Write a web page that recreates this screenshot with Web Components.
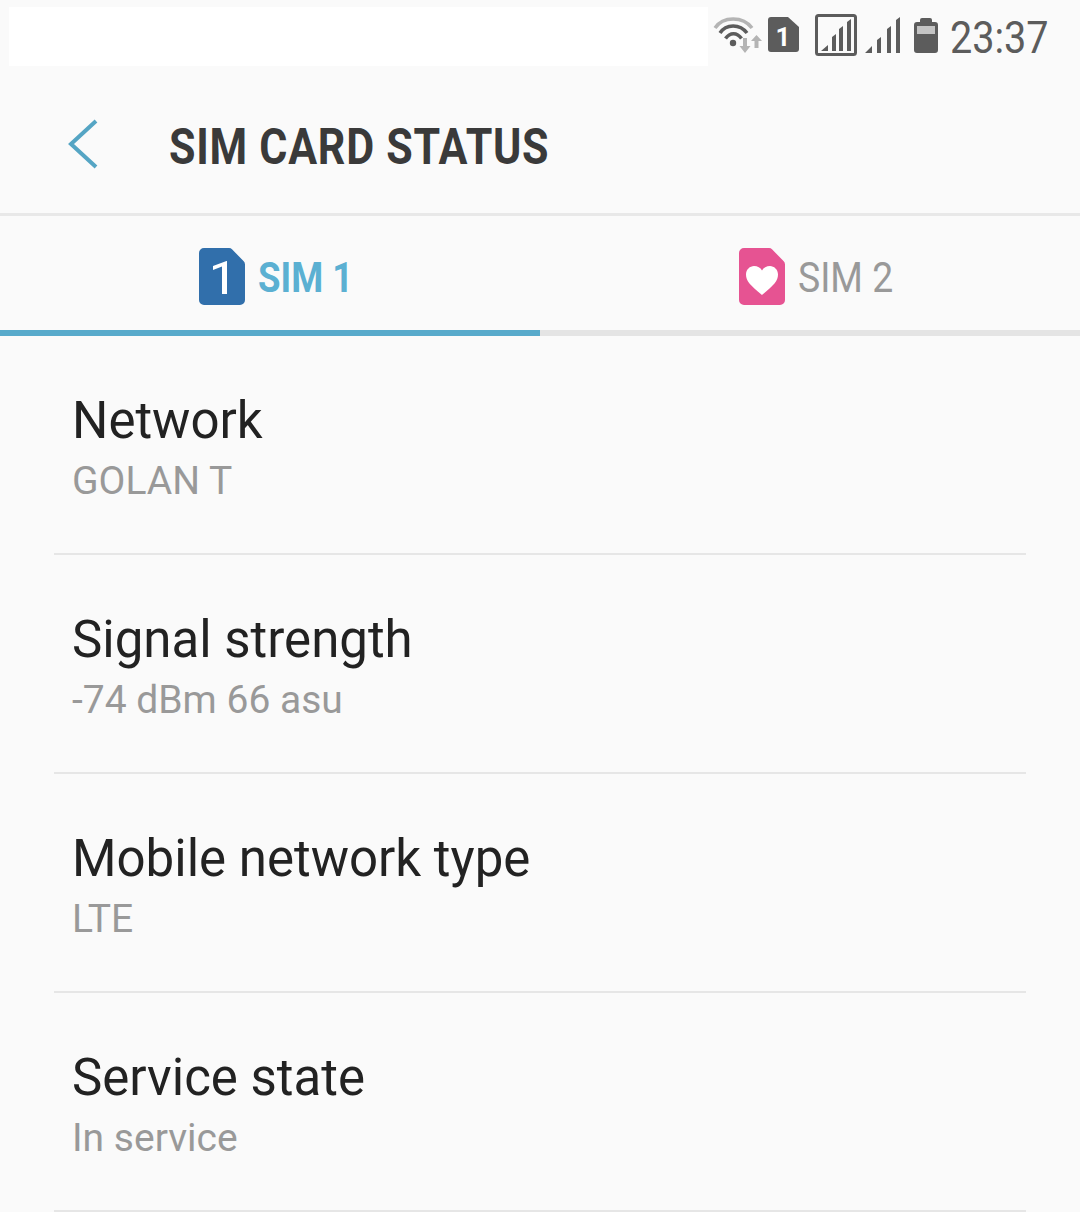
<!DOCTYPE html>
<html>
<head>
<meta charset="utf-8">
<title>SIM card status</title>
<style>
html, body{
    margin: 0;
    height: 1212px;
    overflow: hidden;
    background: #fafafa;
}
</style>
</head>
<body>
<status-bar></status-bar>
<app-header title="SIM CARD STATUS"></app-header>
<sim-tabs></sim-tabs>
<info-row label="Network" value="GOLAN T"></info-row>
<info-row label="Signal strength" value="-74 dBm 66 asu"></info-row>
<info-row label="Mobile network type" value="LTE"></info-row>
<info-row label="Service state" value="In service"></info-row>

<script>
class Status_Bar extends HTMLElement{
    constructor(){
        super();
        const shadowRoot = this.attachShadow({mode: 'open'});
        shadowRoot.innerHTML = `
<style>
:host{
    display: flex;
    height: 75px;
    box-sizing: border-box;
    padding: 7px 0 0 9px;
    align-items: flex-start;
    font-family: Roboto, sans-serif;
}
#blank{
    width: 699px;
    height: 59px;
    background: #fff;
    flex: none;
}
#icons{
    display: flex;
    align-items: flex-start;
    flex: none;
}
svg{
    display: block;
    flex: none;
}
#time{
    font-size: 45px;
    line-height: 44px;
    color: #5c5c5c;
    margin: 9px 0 0 12px;
    transform: scaleX(.88);
    transform-origin: left center;
    white-space: nowrap;
}
</style>
<div id=blank></div>
<div id=icons>
    <svg width="50" height="37" viewBox="0 0 50 37" style="margin:10px 0 0 5px" fill="none">
        <path d="M2 11C10 -1 30 -1 39 11" stroke="#b4b4b4" stroke-width="3.5"/>
        <path d="M7 16C13 6.500 27 6.500 34 16" stroke="#5c5c5c" stroke-width="3.500"/>
        <path d="M12.500 21.500C17 15 24 15 28.500 21.500" stroke="#5c5c5c" stroke-width="3.500"/>
        <circle cx="20" cy="26" r="3.200" fill="#5c5c5c"/>
        <path d="M30 21h4v8h3.500l-5.500 7-5.500-7H30z" fill="#b4b4b4"/>
        <path d="M41.500 31v-7H38l5.500-6 5.500 6h-3.500v7z" fill="#b4b4b4"/>
    </svg>
    <svg width="31" height="35" viewBox="0 0 31 35" style="margin:10px 0 0 5px">
        <path d="M3 0H20L31 10V32a3 3 0 0 1-3 3H3a3 3 0 0 1-3-3V3a3 3 0 0 1 3-3z" fill="#5c5c5c"/>
        <text x="15" y="28.500" text-anchor="middle" font-family="Roboto, sans-serif" font-weight="700" font-size="26" fill="#fff">1</text>
    </svg>
    <svg width="42" height="42" viewBox="0 0 42 42" style="margin:7px 0 0 16px">
        <rect x="1.500" y="1.500" width="39" height="39" rx="2" fill="none" stroke="#5c5c5c" stroke-width="3"/>
        <path d="M6 37l7-6v6zM17 37V23l4-3v17zM24 37V15l4-3v25zM32 37V8l4-3v32z" fill="#5c5c5c"/>
    </svg>
    <svg width="35" height="36" viewBox="0 0 35 36" style="margin:10px 0 0 8px">
        <path d="M0 36l7-7v7zM12 36V23l4-3v16zM22 36V12l4-3v27zM31 36V3l4-3v36z" fill="#5c5c5c"/>
    </svg>
    <svg width="24" height="35" viewBox="0 0 24 35" style="margin:11px 0 0 14px">
        <path d="M6 2a2 2 0 0 1 2-2h8a2 2 0 0 1 2 2v2h3a3 3 0 0 1 3 3v25a3 3 0 0 1-3 3H3a3 3 0 0 1-3-3V7a3 3 0 0 1 3-3h3z" fill="#5c5c5c"/>
        <rect x="3" y="8" width="18" height="8" fill="#c4c4c4"/>
    </svg>
</div>
<div id=time>23:37</div>
`;
    }
}
customElements.define('status-bar', Status_Bar);

class App_Header extends HTMLElement{
    constructor(){
        super();
        const shadowRoot = this.attachShadow({mode: 'open'});
        shadowRoot.innerHTML = `
<style>
:host{
    display: flex;
    align-items: center;
    height: 141px;
    box-sizing: border-box;
    border-bottom: 3px solid #e8e8e8;
    font-family: Roboto, sans-serif;
}
svg{
    display: block;
    flex: none;
    margin: 0 0 0 67px;
}
#title{
    margin: 6px 0 0 70px;
    font-size: 50px;
    font-weight: 700;
    letter-spacing: .86px;
    color: #3a3a3a;
    white-space: nowrap;
    transform: scaleX(.86);
    transform-origin: left center;
}
</style>
<svg width="32" height="50" viewBox="0 0 32 50" fill="none">
    <path d="M29 2L4 25l25 23" stroke="#55a5c4" stroke-width="4"/>
</svg>
<div id=title></div>
`;
        this.titleEl = shadowRoot.querySelector('#title');
    }

    connectedCallback()
    {
        this.titleEl.textContent = this.getAttribute('title');
    }
}
customElements.define('app-header', App_Header);

class Sim_Tabs extends HTMLElement{
    constructor(){
        super();
        const shadowRoot = this.attachShadow({mode: 'open'});
        shadowRoot.innerHTML = `
<style>
:host{
    display: grid;
    grid-template-columns: 1fr 1fr;
    height: 120px;
    font-family: Roboto, sans-serif;
}
.tab{
    display: flex;
    align-items: center;
    justify-content: center;
    gap: 13px;
    box-sizing: border-box;
    border-bottom: 6px solid #e4e4e4;
    padding: 6px 0 0 8px;
    font-size: 42px;
    color: #999;
}
.tab.on{
    border-bottom-color: #58aacb;
    color: #5bb0d2;
    font-weight: 700;
}
.tab span{
    display: block;
    width: 92px;
    margin-top: 2px;
    transform: scaleX(.89);
    transform-origin: left center;
    white-space: nowrap;
}
.tab.on span{
    transform: scaleX(.87);
}
svg{
    display: block;
    flex: none;
}
</style>
<div class="tab on">
    <svg width="46" height="57" viewBox="0 0 46 57">
        <path d="M5 0H30a4 4 0 0 1 3 1.300L44.500 13a5 5 0 0 1 1.500 3.500V52a5 5 0 0 1-5 5H5a5 5 0 0 1-5-5V5a5 5 0 0 1 5-5z" fill="#316fab"/>
        <path d="M28 13V46H23V18.500L14 22V18L27.500 13z" fill="#fff"/>
    </svg>
    <span>SIM 1</span>
</div>
<div class="tab">
    <svg width="46" height="57" viewBox="0 0 46 57">
        <path d="M5 0H30a4 4 0 0 1 3 1.300L44.500 13a5 5 0 0 1 1.500 3.500V52a5 5 0 0 1-5 5H5a5 5 0 0 1-5-5V5a5 5 0 0 1 5-5z" fill="#e65392"/>
        <path d="M23 47C11 37 7 33 7 26.500C7 21.500 11 18 15 18C18.500 18 21.500 19.500 23 22.500C24.500 19.500 27.500 18 31 18C35 18 39 21.500 39 26.500C39 33 35 37 23 47z" fill="#fff"/>
    </svg>
    <span>SIM 2</span>
</div>
`;
    }
}
customElements.define('sim-tabs', Sim_Tabs);

class Info_Row extends HTMLElement{
    constructor(){
        super();
        const shadowRoot = this.attachShadow({mode: 'open'});
        shadowRoot.innerHTML = `
<style>
:host{
    display: block;
    margin: 0 54px;
    height: 219px;
    box-sizing: border-box;
    padding: 55px 0 0 18px;
    border-bottom: 2px solid #e6e6e6;
    font-family: Roboto, sans-serif;
}
#label{
    font-size: 51px;
    line-height: 60px;
    color: #222;
    white-space: nowrap;
}
#value{
    font-size: 39px;
    line-height: 46px;
    margin-top: 7px;
    color: #999;
    white-space: nowrap;
}
</style>
<div id=label></div>
<div id=value></div>
`;
    }

    connectedCallback()
    {
        this.shadowRoot.querySelector('#label').textContent = this.getAttribute('label');
        this.shadowRoot.querySelector('#value').textContent = this.getAttribute('value');
    }
}
customElements.define('info-row', Info_Row);
</script>
</body>
</html>
